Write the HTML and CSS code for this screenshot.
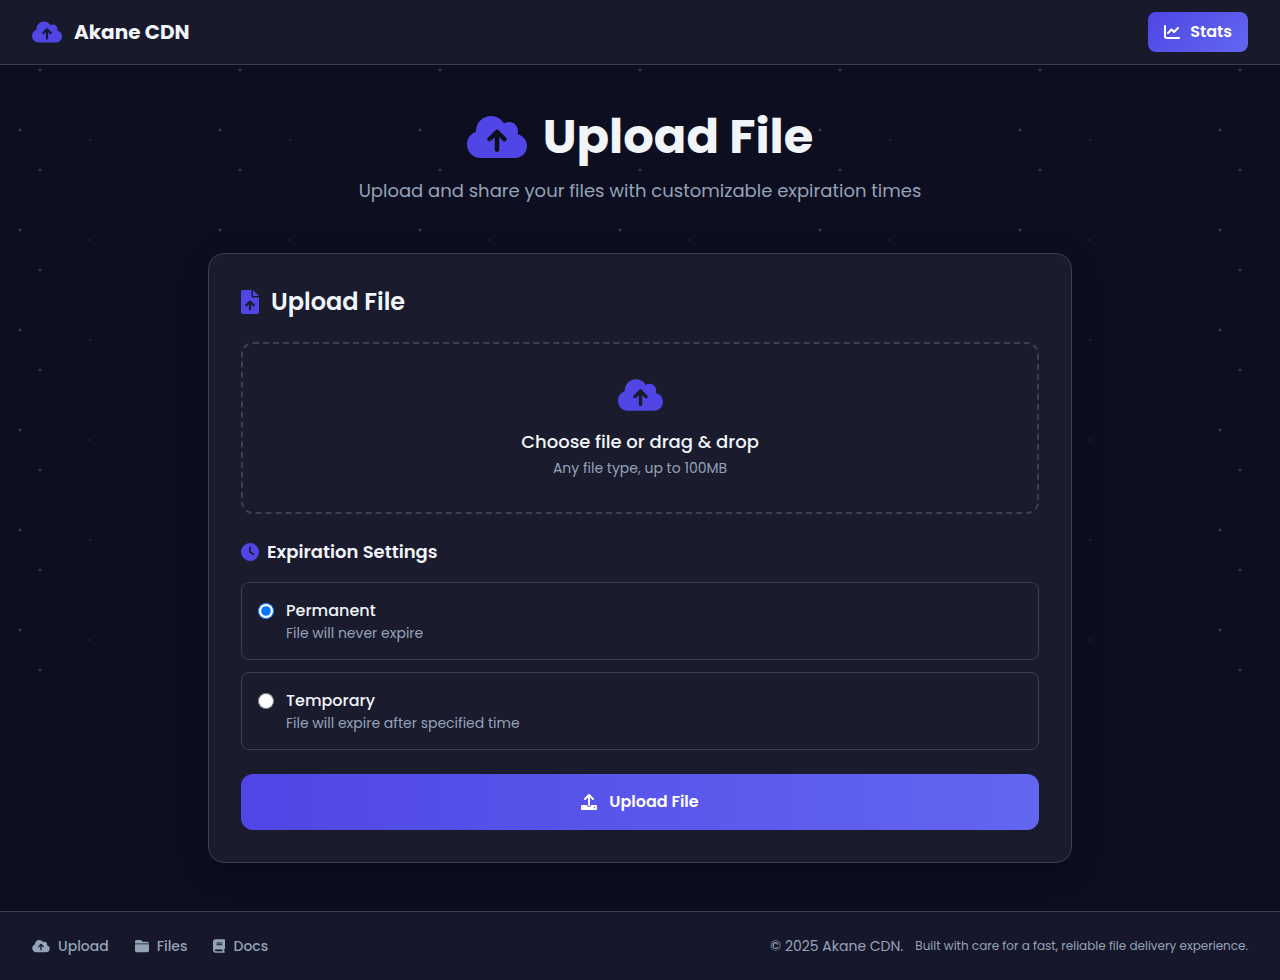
FILE: index.html
```html
<!DOCTYPE html>
<html lang="en">
<head>
<meta charset="utf-8">
<meta name="viewport" content="width=device-width, initial-scale=1">
<title>Akane CDN</title>
<link rel="stylesheet" href="styles.css">
</head>
<body>
<svg class="sprite" aria-hidden="true">
  <symbol id="cloud" viewBox="0 0 640 512"><path d="M144 480C64.5 480 0 415.5 0 336c0-62.8 40.2-116.2 96.2-135.9c-.1-2.7-.2-5.4-.2-8.1c0-88.4 71.6-160 160-160c59.3 0 111 32.2 138.7 80.2C409.9 102 428.3 96 448 96c53 0 96 43 96 96c0 12.2-2.3 23.8-6.4 34.6C596 238.4 640 290.1 640 352c0 70.7-57.3 128-128 128H144zm79-217c-9.4 9.4-9.4 24.6 0 33.9s24.6 9.4 33.9 0l39-39V392c0 13.3 10.7 24 24 24s24-10.7 24-24V257.9l39 39c9.4 9.4 24.6 9.4 33.9 0s9.4-24.6 0-33.9l-80-80c-9.4-9.4-24.6-9.4-33.9 0l-80 80z"/></symbol>
</svg>
<div class="page">
  <div class="stars" aria-hidden="true"></div>
  <header class="header">
    <a class="brand" href="#"><svg class="icon icon-brand"><use href="#cloud"/></svg>Akane CDN</a>
    <a class="stats" href="#stats"><svg class="icon icon-16" viewBox="0 0 512 512"><path d="M64 64c0-17.7-14.3-32-32-32S0 46.3 0 64V400c0 44.2 35.8 80 80 80H480c17.7 0 32-14.3 32-32s-14.3-32-32-32H80c-8.8 0-16-7.2-16-16V64zm406.6 86.6c12.5-12.5 12.5-32.8 0-45.3s-32.8-12.5-45.3 0L320 210.7l-57.4-57.4c-12.5-12.5-32.8-12.5-45.3 0l-112 112c-12.5 12.5-12.5 32.8 0 45.3s32.8 12.5 45.3 0L240 221.3l57.4 57.4c12.5 12.5 32.8 12.5 45.3 0l128-128z"/></svg>Stats</a>
  </header>
  <main class="main">
    <div class="hero">
      <h1 class="title"><svg class="icon icon-hero"><use href="#cloud"/></svg>Upload File</h1>
      <p class="subtitle">Upload and share your files with customizable expiration times</p>
    </div>
    <form class="card">
      <h2 class="card-title"><svg class="icon icon-file" viewBox="0 0 384 512"><path d="M256 0v128h128L256 0zM224 128L224 0H48C21.49 0 0 21.49 0 48v416C0 490.5 21.49 512 48 512h288c26.51 0 48-21.49 48-48V160h-127.1C238.3 160 224 145.7 224 128zM288.1 344.1C284.3 349.7 278.2 352 272 352s-12.28-2.344-16.97-7.031L216 305.9V408c0 13.25-10.75 24-24 24s-24-10.75-24-24V305.9l-39.03 39.03c-9.375 9.375-24.56 9.375-33.94 0s-9.375-24.56 0-33.94l80-80c9.375-9.375 24.56-9.375 33.94 0l80 80C298.3 320.4 298.3 335.6 288.1 344.1z"/></svg>Upload File</h2>
      <label class="dropzone" for="file">
        <input class="file-input" type="file" id="file">
        <svg class="icon icon-drop"><use href="#cloud"/></svg>
        <span class="drop-title">Choose file or drag &amp; drop</span>
        <span class="note">Any file type, up to 100MB</span>
      </label>
      <h3 class="section-title"><svg class="icon icon-18" viewBox="0 0 512 512"><path d="M256 0a256 256 0 1 1 0 512A256 256 0 1 1 256 0zM232 120V256c0 8 4 15.5 10.7 20l96 64c11 7.4 25.9 4.4 33.3-6.7s4.4-25.9-6.7-33.3L280 243.2V120c0-13.3-10.7-24-24-24s-24 10.7-24 24z"/></svg>Expiration Settings</h3>
      <div class="options">
        <label class="option" for="permanent">
          <input class="radio" type="radio" name="expiration" id="permanent" checked>
          <span class="option-text"><span class="option-title">Permanent</span><span class="note">File will never expire</span></span>
        </label>
        <label class="option" for="temporary">
          <input class="radio" type="radio" name="expiration" id="temporary">
          <span class="option-text"><span class="option-title">Temporary</span><span class="note">File will expire after specified time</span></span>
        </label>
      </div>
      <button class="submit" type="button"><svg class="icon icon-16" viewBox="0 0 512 512"><path d="M105.4 182.6c12.5 12.49 32.76 12.5 45.25 .001L224 109.3V352c0 17.67 14.33 32 32 32c17.67 0 32-14.33 32-32V109.3l73.38 73.38c12.49 12.49 32.75 12.49 45.25-.001c12.49-12.49 12.49-32.75 0-45.25l-128-128C272.4 3.125 264.2 0 256 0S239.6 3.125 233.4 9.375L105.4 137.4C92.88 149.9 92.88 170.1 105.4 182.6zM480 352h-160c0 35.35-28.65 64-64 64s-64-28.65-64-64H32c-17.67 0-32 14.33-32 32v96c0 17.67 14.33 32 32 32h448c17.67 0 32-14.33 32-32v-96C512 366.3 497.7 352 480 352zM432 456c-13.2 0-24-10.8-24-24c0-13.2 10.8-24 24-24s24 10.8 24 24C456 445.2 445.2 456 432 456z"/></svg>Upload File</button>
    </form>
  </main>
  <footer class="footer">
    <nav class="links">
      <a class="link" href="#upload"><svg class="icon icon-link-cloud"><use href="#cloud"/></svg>Upload</a>
      <a class="link" href="#files"><svg class="icon icon-14" viewBox="0 0 512 512"><path d="M448 480H64c-35.300 0-64-28.700-64-64V192H512V416c0 35.300-28.700 64-64 64zm64-320H0V96C0 60.700 28.700 32 64 32H192c20.100 0 39.100 9.500 51.200 25.600l19.200 25.600c6 8.100 15.500 12.800 25.600 12.800H448c35.300 0 64 28.700 64 64z"/></svg>Files</a>
      <a class="link" href="#docs"><svg class="icon icon-book" viewBox="0 0 448 512"><path d="M96 0C43 0 0 43 0 96V416c0 53 43 96 96 96H384h32c17.700 0 32-14.300 32-32s-14.300-32-32-32V384c17.700 0 32-14.300 32-32V32c0-17.700-14.300-32-32-32H384 96zm0 384H352v64H96c-17.700 0-32-14.300-32-32s14.300-32 32-32zm32-240c0-8.800 7.200-16 16-16H336c8.800 0 16 7.200 16 16s-7.200 16-16 16H144c-8.800 0-16-7.200-16-16zm16 48H336c8.800 0 16 7.200 16 16s-7.200 16-16 16H144c-8.800 0-16-7.200-16-16s7.200-16 16-16z"/></svg>Docs</a>
    </nav>
    <div class="legal"><span>© 2025 Akane CDN.</span><span class="tagline">Built with care for a fast, reliable file delivery experience.</span></div>
  </footer>
</div>
</body>
</html>
```
FILE: styles.css
```css
* { box-sizing: border-box; margin: 0; }

body {
  background: #0d0e20;
  color: #f1f5f9;
  font: 400 16px/24px Poppins, Inter, "Open Sans", sans-serif;
}

a { color: inherit; text-decoration: none; }

.sprite { display: none; }
.page { position: relative; display: flex; flex-direction: column; min-height: 100vh; }

.stars {
  position: absolute;
  inset: 0 0 auto;
  height: 720px;
  opacity: 0.3;
  background-image:
    radial-gradient(2px 2px at 20px 30px, #eee, transparent),
    radial-gradient(2px 2px at 40px 70px, rgba(255, 255, 255, 0.8), transparent),
    radial-gradient(1px 1px at 90px 40px, #fff, transparent);
  background-size: 200px 100px;
}

.icon { display: block; flex: none; fill: currentColor; color: #4f46e5; }
.icon-brand { width: 30px; height: 24px; }
.icon-hero { width: 60px; height: 48px; }
.icon-drop { width: 45px; height: 36px; margin-bottom: 15px; }
.icon-file { width: 18px; height: 24px; }
.icon-18 { width: 18px; height: 18px; }
.icon-16 { width: 16px; height: 16px; color: #fff; }
.icon-14 { width: 14px; height: 14px; color: inherit; }
.icon-link-cloud { width: 18px; height: 14px; color: inherit; }
.icon-book { width: 12px; height: 14px; color: inherit; }

.header {
  position: relative;
  display: flex;
  align-items: center;
  justify-content: space-between;
  padding: 12px 32px;
  background: #18192b;
  border-bottom: 1px solid #374151;
}
.brand { display: flex; align-items: center; gap: 12px; font-size: 20px; font-weight: 700; }
.stats {
  display: flex;
  align-items: center;
  gap: 10px;
  padding: 8px 16px;
  border-radius: 8px;
  background: linear-gradient(135deg, #4f46e5, #6366f1);
  color: #fff;
  font-weight: 600;
}

.main { position: relative; flex: 1; width: 100%; max-width: 896px; margin: 0 auto; padding: 48px 16px; }
.hero { margin-bottom: 48px; text-align: center; }
.title {
  display: flex;
  align-items: center;
  justify-content: center;
  gap: 16px;
  margin-bottom: 16px;
  font-size: 48px;
  line-height: 48px;
  font-weight: 700;
}
.subtitle { color: #94a3b8; font-size: 18px; line-height: 28px; }

.card {
  padding: 32px;
  border: 1px solid #374151;
  border-radius: 16px;
  background: #1a1b2d;
  box-shadow: 0 8px 32px rgba(0, 0, 0, 0.3);
}
.card-title { display: flex; align-items: center; gap: 12px; margin-bottom: 24px; font-size: 24px; line-height: 32px; font-weight: 600; }

.dropzone {
  position: relative;
  display: flex;
  flex-direction: column;
  align-items: center;
  padding: 33px 32px 34px;
  border: 2px dashed #374151;
  border-radius: 12px;
}
.file-input { position: absolute; inset: 0; width: 100%; height: 100%; opacity: 0; }
.drop-title { margin-bottom: 2px; font-size: 18px; line-height: 28px; font-weight: 500; }
.note { color: #94a3b8; font-size: 14px; line-height: 20px; }

.section-title { display: flex; align-items: center; gap: 8px; margin: 24px 0 16px; font-size: 18px; line-height: 28px; font-weight: 600; }
.options { display: grid; gap: 12px; margin-bottom: 24px; }
.option { display: flex; align-items: flex-start; gap: 12px; padding: 16px; border: 1px solid #374151; border-radius: 8px; }
.radio { width: 16px; height: 16px; margin: 4px 0 0; }
.option-text { display: flex; flex-direction: column; }
.option-title { font-weight: 500; }

.submit {
  display: flex;
  align-items: center;
  justify-content: center;
  gap: 12px;
  width: 100%;
  padding: 16px;
  border: 0;
  border-radius: 12px;
  background: linear-gradient(90deg, #4f46e5, #6366f1);
  color: #fff;
  font: inherit;
  font-weight: 600;
}

.footer {
  position: relative;
  display: flex;
  align-items: center;
  justify-content: space-between;
  padding: 24px 32px;
  border-top: 1px solid #374151;
  background: #16172a;
  color: #94a3b8;
  font-size: 14px;
  line-height: 20px;
}
.links { display: flex; gap: 26px; font-weight: 500; }
.link { display: flex; align-items: center; gap: 8px; }
.legal { display: flex; align-items: center; gap: 12px; }
.tagline { font-size: 12px; }
```
